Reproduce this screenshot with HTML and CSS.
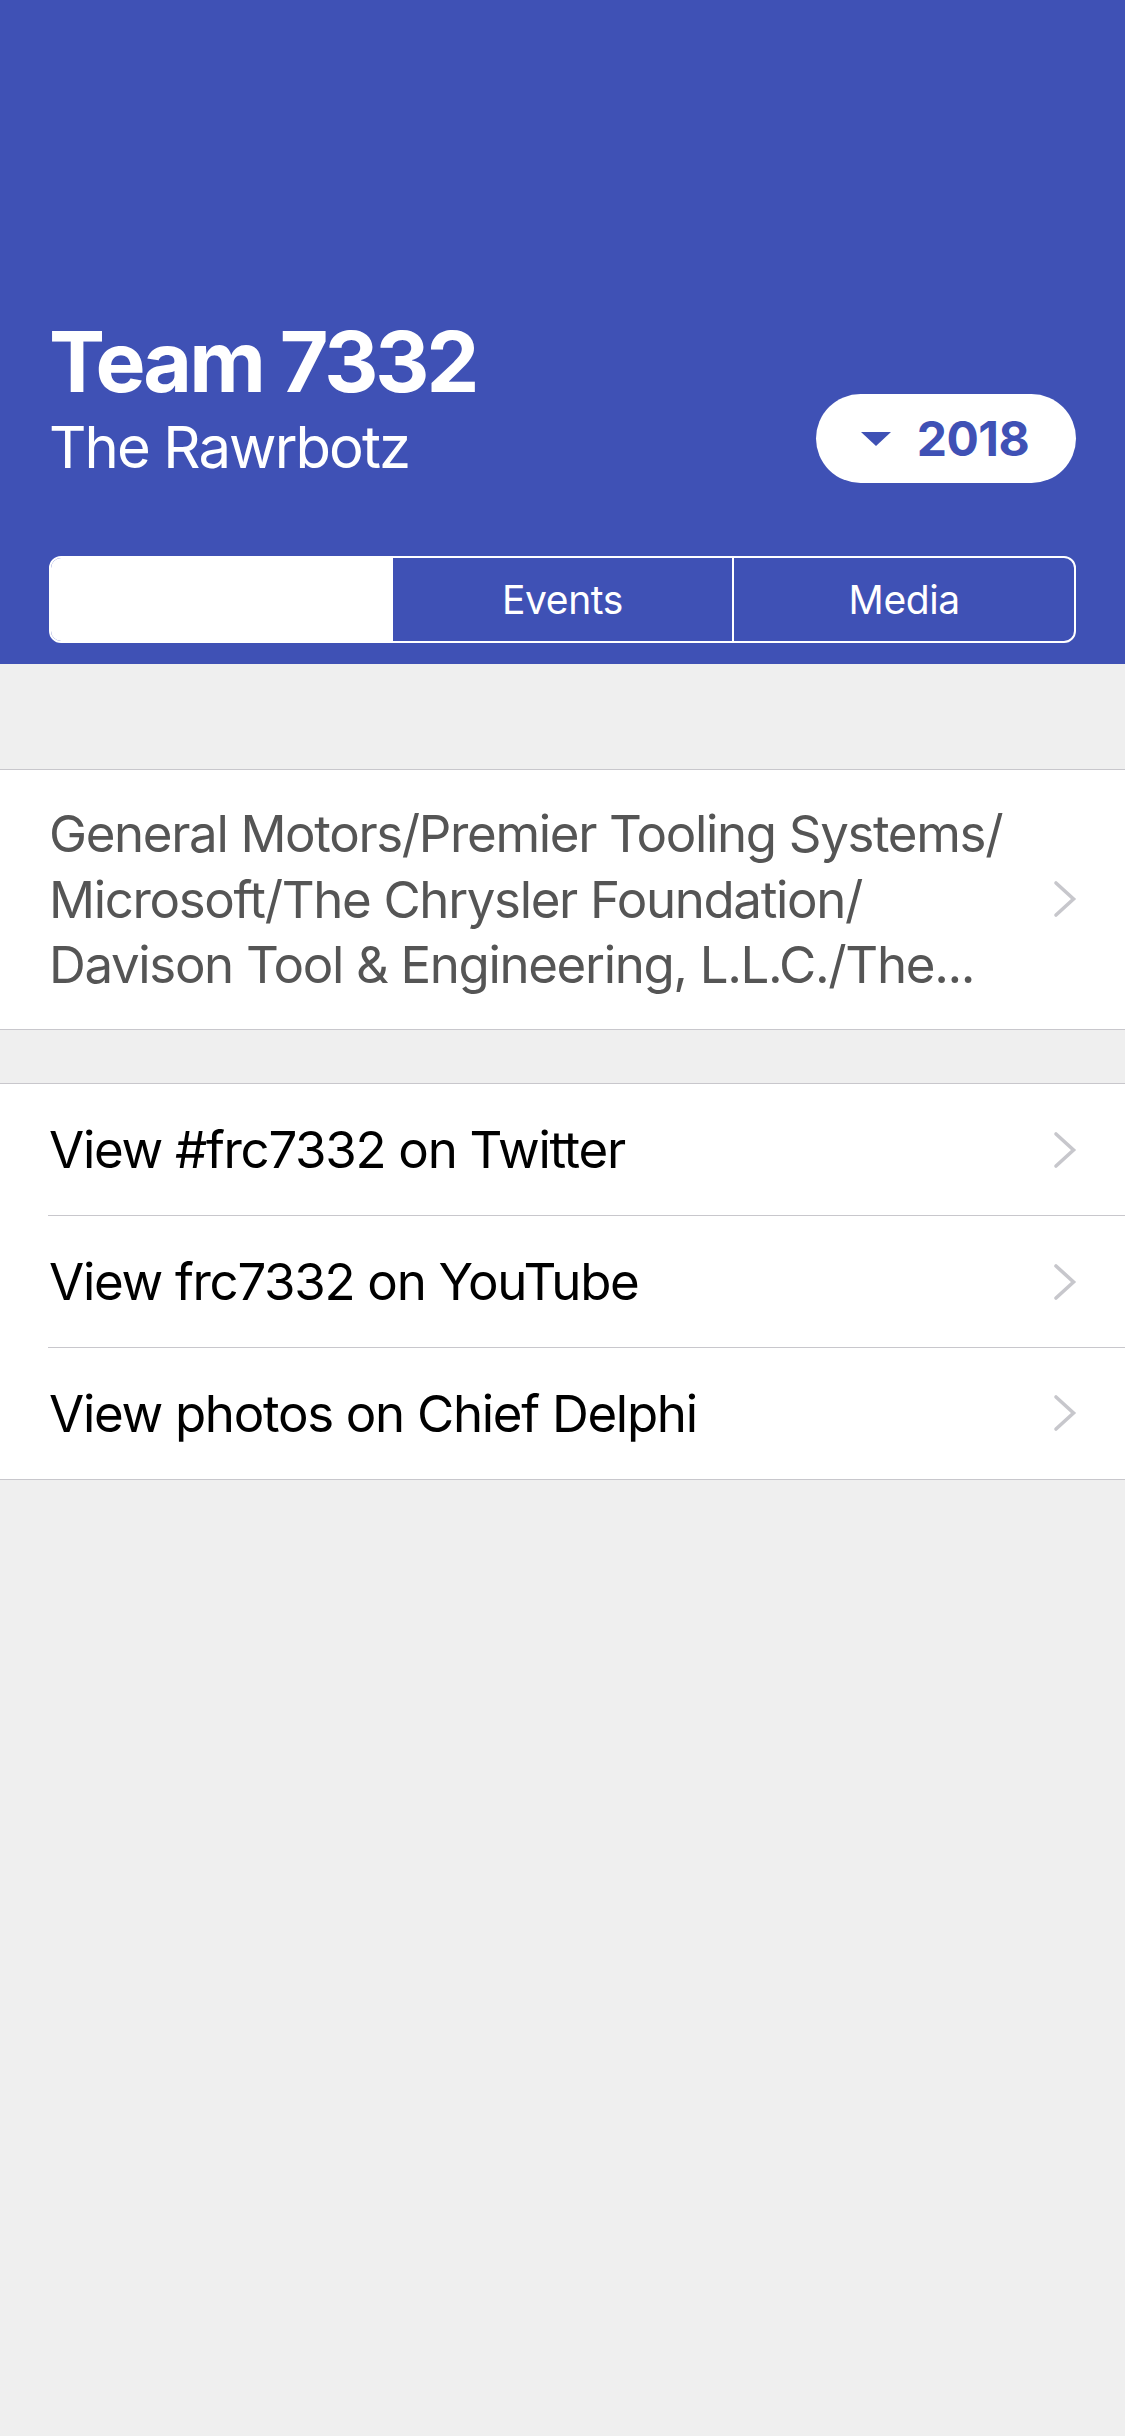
FILE: index.html
```html
<!DOCTYPE html>
<html lang="en">
<head>
<meta charset="utf-8">
<title>Team 7332</title>
<link rel="stylesheet" href="styles.css">
</head>
<body>
<div class="page">
  <header class="header">
    <div class="header-top">
      <div class="titles">
        <h1 class="title">Team 7332</h1>
        <div class="subtitle">The Rawrbotz</div>
      </div>
      <button class="year-btn">
        <svg class="year-caret" viewBox="0 0 30 14" width="30" height="14"><path d="M0 0 H30 L15 14 Z" fill="#3f51b5"/></svg>
        <span class="year-text">2018</span>
      </button>
    </div>
    <div class="segments">
      <div class="segment selected"></div>
      <div class="segment">Events</div>
      <div class="segment">Media</div>
    </div>
  </header>

  <section class="group group-first">
    <div class="row sponsor-row">
      <div class="sponsor-text">
        <span class="line">General Motors/Premier Tooling Systems/</span>
        <span class="line">Microsoft/The Chrysler Foundation/</span>
        <span class="line">Davison Tool &amp; Engineering, L.L.C./The...</span>
      </div>
      <svg class="chevron" viewBox="0 0 24 38" width="24" height="38"><path d="M3 3 L20.5 19 L3 35" fill="none" stroke="#c7c7cc" stroke-width="3.6" stroke-linecap="round" stroke-linejoin="miter"/></svg>
    </div>
  </section>

  <section class="group group-links">
    <div class="row link-row">
      <span class="link-text">View #frc7332 on Twitter</span>
      <svg class="chevron" viewBox="0 0 24 38" width="24" height="38"><path d="M3 3 L20.5 19 L3 35" fill="none" stroke="#c7c7cc" stroke-width="3.6" stroke-linecap="round" stroke-linejoin="miter"/></svg>
    </div>
    <div class="row link-row">
      <span class="link-text">View frc7332 on YouTube</span>
      <svg class="chevron" viewBox="0 0 24 38" width="24" height="38"><path d="M3 3 L20.5 19 L3 35" fill="none" stroke="#c7c7cc" stroke-width="3.6" stroke-linecap="round" stroke-linejoin="miter"/></svg>
    </div>
    <div class="row link-row last">
      <span class="link-text">View photos on Chief Delphi</span>
      <svg class="chevron" viewBox="0 0 24 38" width="24" height="38"><path d="M3 3 L20.5 19 L3 35" fill="none" stroke="#c7c7cc" stroke-width="3.6" stroke-linecap="round" stroke-linejoin="miter"/></svg>
    </div>
  </section>
</div>
</body>
</html>
```
FILE: styles.css
```css
* { box-sizing: border-box; }
html, body {
  margin: 0;
  padding: 0;
  background: #efeff4;
  font-family: Inter, "Noto Sans", sans-serif;
}
.page {
  width: 1125px;
  min-height: 2436px;
  background: #efefef;
}
.header {
  background: #3f51b5;
  padding: 312px 49px 21px 49px;
  color: #fff;
}
.header-top {
  display: flex;
  justify-content: space-between;
  align-items: flex-end;
}
.title {
  margin: 0;
  font-size: 84px;
  line-height: 100px;
  font-weight: 700;
  letter-spacing: -3px;
}
.subtitle {
  font-size: 58px;
  line-height: 70px;
  font-weight: 400;
  letter-spacing: -1.9px;
}
.year-btn {
  margin: 0 0 -1px 0;
  width: 260px;
  height: 89px;
  border: none;
  border-radius: 45px;
  background: #fff;
  display: flex;
  align-items: center;
  justify-content: center;
  gap: 26px;
  padding: 0 2px 0 0;
  font-family: inherit;
}
.year-caret { display: block; flex: none; }
.year-text {
  color: #3f51b5;
  font-size: 48px;
  font-weight: 700;
  line-height: 1;
  letter-spacing: -0.5px;
}
.segments {
  margin-top: 74px;
  height: 87px;
  border: 2px solid #fff;
  border-radius: 12px;
  display: flex;
  overflow: hidden;
}
.segment {
  flex: 1;
  display: flex;
  align-items: center;
  justify-content: center;
  font-size: 39px;
  color: #fff;
  letter-spacing: -0.4px;
}
.segment + .segment { border-left: 2px solid #fff; }
.segment.selected { background: #fff; }

.group {
  background: #fff;
  border-top: 1px solid #c8c7cc;
  border-bottom: 1px solid #c8c7cc;
}
.group-first { margin-top: 105px; }
.group-links { margin-top: 53px; }

.row {
  display: flex;
  align-items: center;
  justify-content: space-between;
  padding: 0 48px 0 49px;
}
.sponsor-row {
  padding-top: 31px;
  padding-bottom: 31px;
}
.sponsor-text {
  font-size: 51px;
  line-height: 65.5px;
  color: #555555;
  letter-spacing: -1.35px;
}
.sponsor-text .line { display: block; white-space: nowrap; }

.link-row {
  height: 132px;
  position: relative;
}
.link-row::after {
  content: "";
  position: absolute;
  left: 48px;
  right: 0;
  bottom: 0;
  height: 1px;
  background: #c8c7cc;
}
.link-row.last { height: 131px; }
.link-row.last::after { display: none; }
.link-text {
  font-size: 51px;
  color: #000;
  letter-spacing: -1.3px;
}
.chevron { display: block; flex: none; }
```
